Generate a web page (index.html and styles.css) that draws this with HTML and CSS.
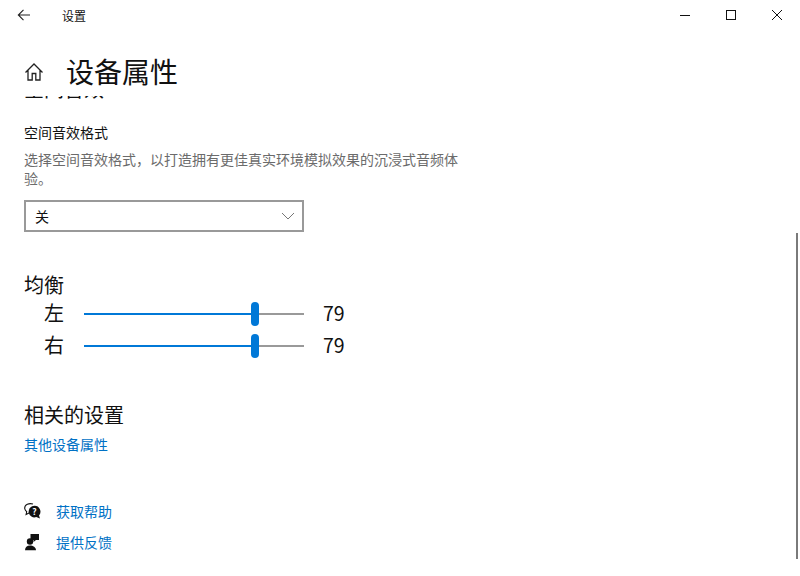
FILE: index.html
```html
<!DOCTYPE html>
<html lang="zh-CN">
<head>
  <meta charset="UTF-8" />
  <title>设置</title>
  <link rel="stylesheet" href="styles.css">
</head>
<body>
  <div class="window">
    <div class="titlebar">
      <svg class="back-icon" width="16" height="16" viewBox="0 0 16 16"><path d="M14 8H2.500M7.500 2.800L2.300 8l5.200 5.200" fill="none" stroke="#222" stroke-width="1.100"/></svg>
      <span class="app-name">设置</span>
      <div class="window-buttons">
        <svg width="12" height="12" viewBox="0 0 12 12"><path d="M1 6.500h10" stroke="#111" stroke-width="1"/></svg>
        <svg width="12" height="12" viewBox="0 0 12 12"><rect x="1.500" y="1.500" width="9" height="9" fill="none" stroke="#111" stroke-width="1"/></svg>
        <svg width="12" height="12" viewBox="0 0 12 12"><path d="M1 1l10 10M11 1L1 11" stroke="#111" stroke-width="1"/></svg>
      </div>
    </div>

    <div class="page-header">
      <svg class="home-icon" width="20" height="20" viewBox="0 0 20 20"><path d="M1.500 10.500L10 2l8.500 8.500M4 8v10h4.200v-6.500h3.600V18H16V8" fill="none" stroke="#222" stroke-width="1.300"/></svg>
      <h1>设备属性</h1>
    </div>

    <div class="scroller">
      <div class="content">
        <h2 class="cut-heading">空间音效</h2>
        <div class="field-label">空间音效格式</div>
        <p class="desc">选择空间音效格式，以打造拥有更佳真实环境模拟效果的沉浸式音频体验。</p>
        <div class="select">
          <span>关</span>
          <svg width="14" height="8" viewBox="0 0 14 8"><path d="M1 1l6 6 6-6" fill="none" stroke="#777" stroke-width="1"/></svg>
        </div>

        <h2 class="balance-title">均衡</h2>
        <div class="slider-row">
          <span class="side">左</span>
          <div class="slider">
            <div class="track-on"></div>
            <div class="thumb"></div>
            <div class="track-off"></div>
          </div>
          <span class="value">79</span>
        </div>
        <div class="slider-row">
          <span class="side">右</span>
          <div class="slider">
            <div class="track-on"></div>
            <div class="thumb"></div>
            <div class="track-off"></div>
          </div>
          <span class="value">79</span>
        </div>

        <h2 class="related-title">相关的设置</h2>
        <a class="link" href="#">其他设备属性</a>

        <div class="help-links">
          <div class="help-row">
            <svg width="20" height="20" viewBox="0 0 20 20">
              <path d="M9 3C5 1.800 .7 3.500.7 7c0 1.800 1 3 2 3.800l-.6 2.700 3.400-1.800" fill="none" stroke="#111" stroke-width="1.100"/>
              <path d="M10.500 4.800a5.800 5.800 0 1 0 1.800 11.300l3.700 1.500-1-3.200a5.800 5.800 0 0 0-4.500-9.600z" fill="#111"/>
              <text class="help-mark" x="10.500" y="14">?</text>
            </svg>
            <a class="link" href="#">获取帮助</a>
          </div>
          <div class="help-row">
            <svg width="20" height="20" viewBox="0 0 20 20">
              <path d="M6.500 2H15v6h-3l-2.500 2V8h-3z" fill="#111"/>
              <circle cx="6" cy="9.500" r="3.200" fill="#111"/>
              <path d="M1 18.300c0-3 2-4.800 5-4.800s6 1.800 6 4.800z" fill="#111"/>
            </svg>
            <a class="link" href="#">提供反馈</a>
          </div>
        </div>
      </div>
    </div>

    <div class="scrollbar"></div>
  </div>
</body>
</html>
```

FILE: styles.css
```css
* {
  box-sizing: border-box;
}

html, body {
  margin: 0;
  height: 100%;
}

body {
  background: #fff;
  color: #000;
  font-family: "Noto Sans CJK SC", "Noto Sans", sans-serif;
  overflow: hidden;
}

.window {
  position: relative;
  width: 800px;
  height: 576px;
  display: flex;
  flex-direction: column;
}

.titlebar {
  height: 32px;
  flex: none;
  display: flex;
  align-items: center;
}

.back-icon {
  margin-left: 16px;
  margin-bottom: 2px;
}

.app-name {
  margin-left: 30px;
  font-size: 12px;
  line-height: 32px;
  color: #111;
}

.window-buttons {
  margin-left: auto;
  margin-right: 17px;
  display: flex;
  gap: 34px;
  margin-bottom: 2px;
}

.page-header {
  height: 64px;
  flex: none;
  display: flex;
  align-items: center;
  padding-left: 24px;
  padding-top: 13px;
}

.home-icon {
  margin-top: 3px;
}

h1 {
  margin: 0 0 0 22px;
  font-size: 28px;
  font-weight: 400;
  line-height: 40px;
  color: #111;
}

.scroller {
  flex: 1;
  overflow: hidden;
}

.content {
  padding-left: 24px;
  margin-top: -22px;
}

h2 {
  margin: 0;
  font-size: 20px;
  font-weight: 400;
  color: #111;
}

.cut-heading {
  line-height: 30px;
}

.field-label {
  margin-top: 18px;
  font-size: 14px;
  line-height: 20px;
  color: #111;
}

.desc {
  width: 436px;
  margin: 8px 0 0;
  font-size: 14px;
  line-height: 19px;
  color: #6b6b6b;
}

.select {
  width: 280px;
  height: 32px;
  margin-top: 12px;
  padding: 0 7px 0 9px;
  border: 2px solid #999;
  display: flex;
  align-items: center;
  justify-content: space-between;
  font-size: 14px;
  color: #111;
}

.balance-title {
  margin-top: 38px;
  line-height: 30px;
}

.slider-row {
  height: 32px;
  display: flex;
  align-items: center;
}

.balance-title + .slider-row {
  margin-top: -2px;
}

.side {
  width: 40px;
  margin-bottom: 4px;
  text-align: right;
  font-size: 20px;
  color: #111;
}

.slider {
  width: 220px;
  margin-left: 20px;
  display: flex;
  align-items: center;
}

.track-on {
  width: 167px;
  height: 2px;
  background: #0078d7;
}

.track-off {
  flex: 1;
  height: 2px;
  background: #999;
}

.thumb {
  width: 8px;
  height: 24px;
  border-radius: 4px;
  background: #0078d7;
}

.value {
  margin-left: 19px;
  margin-bottom: 4px;
  font-size: 19.500px;
  color: #111;
}

.related-title {
  margin-top: 38px;
  line-height: 30px;
}

.link {
  display: block;
  color: #0071c5;
  font-size: 14px;
  line-height: 20px;
  text-decoration: none;
}

.related-title + .link {
  margin-top: 4px;
}

.help-links {
  margin-top: 47px;
  display: flex;
  flex-direction: column;
  gap: 11px;
}

.help-row {
  height: 20px;
  display: flex;
  align-items: center;
  gap: 12px;
}

.help-mark {
  fill: #fff;
  font-size: 8.500px;
  font-weight: 700;
  text-anchor: middle;
}

.scrollbar {
  position: absolute;
  right: 2px;
  top: 233px;
  width: 2px;
  height: 326px;
  background: #7a7a7a;
}
```
